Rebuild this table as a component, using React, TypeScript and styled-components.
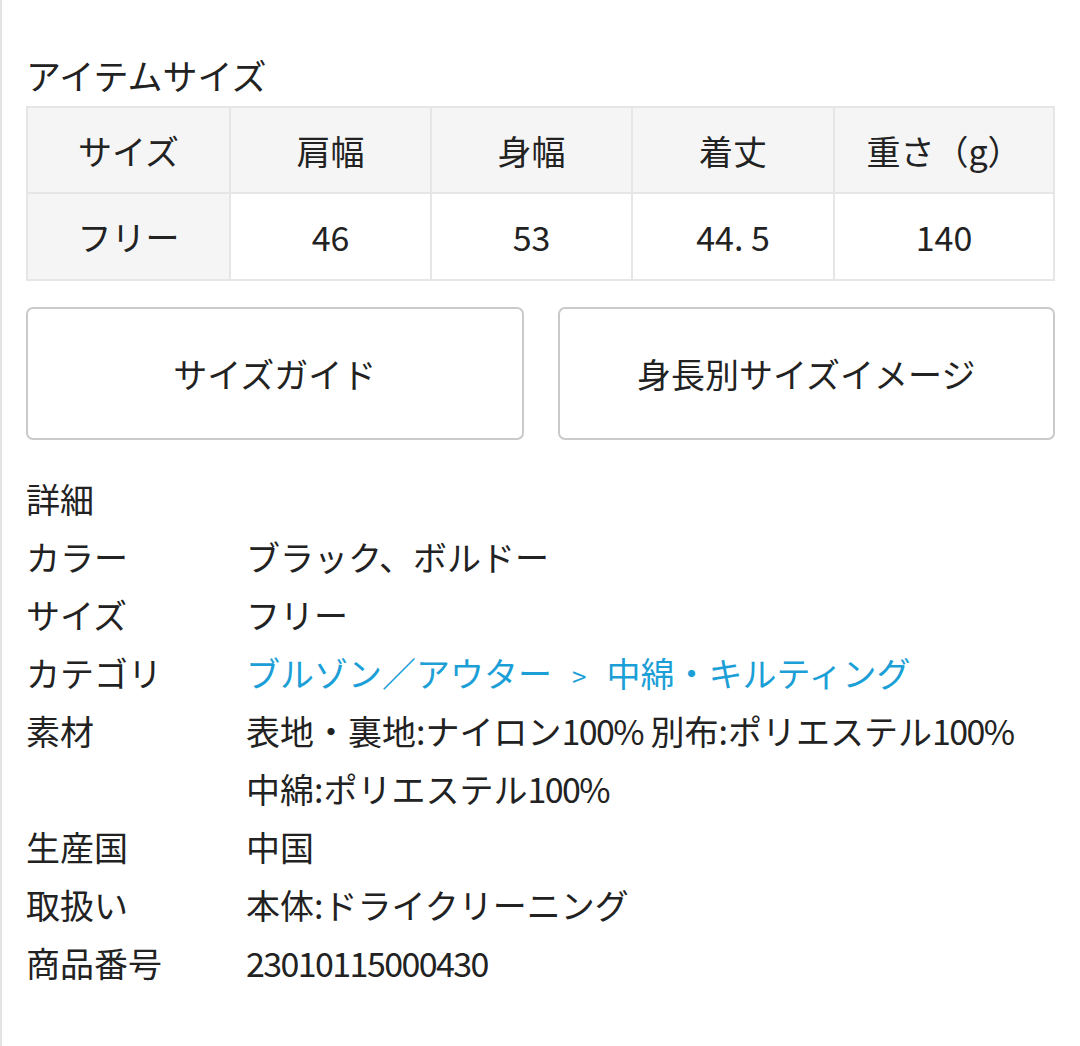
import React from "react";
import styled, { createGlobalStyle } from "styled-components";

const GlobalStyle = createGlobalStyle`
  html, body {
    margin: 0;
    padding: 0;
    background: #ffffff;
  }
  body {
    font-family: "Noto Sans CJK JP", "Noto Sans", sans-serif;
    color: #222222;
  }
`;

const Page = styled.div`
  min-height: 1046px;
  box-sizing: border-box;
  border-left: 2px solid #e4e4e4;
  padding: 55px 25px 40px 24px;
`;

const SectionTitle = styled.h2`
  margin: 0 0 11px;
  font-size: 35px;
  font-weight: 400;
  line-height: 40px;
`;

const SizeTable = styled.div`
  display: grid;
  grid-template-columns: 203px 201px 201px 202px 1fr;
  border-top: 2px solid #e6e6e6;
  border-left: 2px solid #e6e6e6;
`;

const Cell = styled.div<{ $head?: boolean; $h: number }>`
  display: flex;
  align-items: center;
  justify-content: center;
  height: ${({ $h }) => $h}px;
  box-sizing: border-box;
  border-right: 2px solid #e6e6e6;
  border-bottom: 2px solid #e6e6e6;
  background: ${({ $head }) => ($head ? "#f5f5f5" : "#ffffff")};
  font-size: 34px;
`;

const ButtonRow = styled.div`
  display: grid;
  grid-template-columns: 1fr 1fr;
  gap: 34px;
  margin-top: 26px;
`;

const GuideButton = styled.button`
  height: 133px;
  border: 2px solid #cacaca;
  border-radius: 7px;
  background: #ffffff;
  font-family: inherit;
  font-size: 34px;
  color: #222222;
  cursor: pointer;
`;

const Details = styled.div`
  margin-top: 30px;
  font-size: 34px;
  line-height: 58px;
`;

const DetailHead = styled.div``;

const DetailRow = styled.div`
  display: grid;
  grid-template-columns: 220px 1fr;
`;

const Label = styled.div``;

const Value = styled.div``;

// latin runs in the reference are set in a narrower face
const Code = styled.span`
  letter-spacing: -1.6px;
`;

const Link = styled.a`
  color: #1c9fd7;
  text-decoration: none;
`;

const Crumb = styled.span`
  display: inline-block;
  font-size: 26px;
  line-height: 1;
  vertical-align: baseline;
  margin: 0 20px 0 20px;
`;

const headers = ["サイズ", "肩幅", "身幅", "着丈", "重さ（g）"];
const values = ["フリー", "46", "53", "44. 5", "140"];

const details: { label: string; value: React.ReactNode }[] = [
  { label: "カラー", value: "ブラック、ボルドー" },
  { label: "サイズ", value: "フリー" },
  {
    label: "カテゴリ",
    value: (
      <>
        <Link href="#">ブルゾン／アウター</Link>
        <Crumb>
          <Link href="#">&gt;</Link>
        </Crumb>
        <Link href="#">中綿・キルティング</Link>
      </>
    ),
  },
  {
    label: "素材",
    value: (
      <>
        表地・裏地:ナイロン<Code>100%</Code> 別布:ポリエステル<Code>100%</Code>
        <br />
        中綿:ポリエステル<Code>100%</Code>
      </>
    ),
  },
  { label: "生産国", value: "中国" },
  { label: "取扱い", value: "本体:ドライクリーニング" },
  { label: "商品番号", value: <Code>23010115000430</Code> },
];

const App: React.FC = () => {
  return (
    <Page>
      <GlobalStyle />
      <SectionTitle>アイテムサイズ</SectionTitle>
      <SizeTable>
        {headers.map((h) => (
          <Cell key={h} $head $h={86}>
            {h}
          </Cell>
        ))}
        {values.map((v, i) => (
          <Cell key={v} $head={i === 0} $h={87}>
            {v}
          </Cell>
        ))}
      </SizeTable>
      <ButtonRow>
        <GuideButton>サイズガイド</GuideButton>
        <GuideButton>身長別サイズイメージ</GuideButton>
      </ButtonRow>
      <Details>
        <DetailHead>詳細</DetailHead>
        {details.map((d) => (
          <DetailRow key={d.label}>
            <Label>{d.label}</Label>
            <Value>{d.value}</Value>
          </DetailRow>
        ))}
      </Details>
    </Page>
  );
};

export default App;
